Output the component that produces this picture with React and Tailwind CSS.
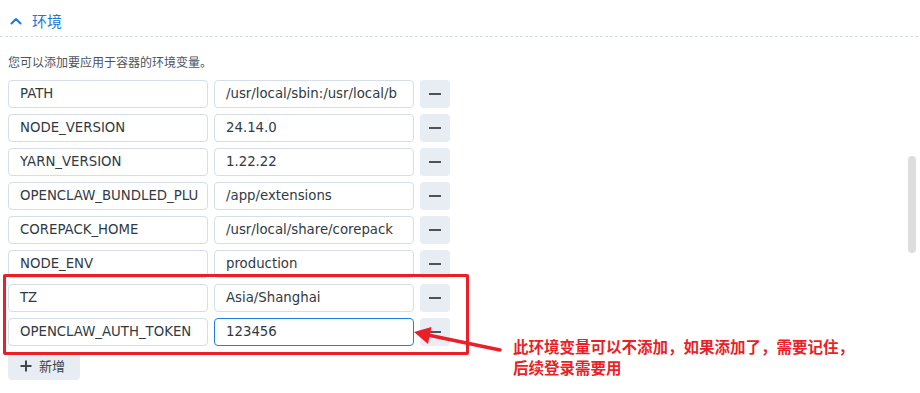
import React from "react";

const rows = [
  { k: "PATH", v: "/usr/local/sbin:/usr/local/b" },
  { k: "NODE_VERSION", v: "24.14.0" },
  { k: "YARN_VERSION", v: "1.22.22" },
  { k: "OPENCLAW_BUNDLED_PLU", v: "/app/extensions" },
  { k: "COREPACK_HOME", v: "/usr/local/share/corepack" },
  { k: "NODE_ENV", v: "production" },
  { k: "TZ", v: "Asia/Shanghai" },
  { k: "OPENCLAW_AUTH_TOKEN", v: "123456", focus: true },
];

function EnvRow({ k, v, focus }) {
  return (
    <div className="flex gap-[6px] h-[28px]">
      <div className="w-[200px] h-full border border-[#d5dde7] rounded-[4px] pl-[11px] pr-[8px] flex items-center overflow-hidden whitespace-nowrap text-[13.3px] text-[#313a44]">
        {k}
      </div>
      <div
        className={
          focus
            ? "w-[200px] h-full border border-[#1f7fe0] rounded-[4px] pl-[11px] pr-[8px] flex items-center overflow-hidden whitespace-nowrap text-[13.3px] text-[#313a44]"
            : "w-[200px] h-full border border-[#d5dde7] rounded-[4px] pl-[11px] pr-[8px] flex items-center overflow-hidden whitespace-nowrap text-[13.3px] text-[#313a44]"
        }
      >
        {v}
      </div>
      <button className="w-[30px] h-full rounded-[4px] bg-[#e8ecf3] flex items-center justify-center">
        <span className="block w-[12px] h-[2px] bg-[#4a535e]" />
      </button>
    </div>
  );
}

export default function App() {
  return (
    <div className="relative w-[920px] h-[393px] bg-white overflow-hidden font-['DejaVu_Sans','Noto_Sans_CJK_SC',sans-serif]">
      {/* section header */}
      <div className="h-[36px] pt-[6px] pl-[10px] flex items-center gap-[10px] text-[#1a7ad8]">
        <svg width="12" height="8" viewBox="0 0 12 8" fill="none">
          <path d="M1.5 6.5 L6 2 L10.5 6.5" stroke="#1a7ad8" strokeWidth="2" strokeLinecap="round" strokeLinejoin="round" />
        </svg>
        <span className="text-[15px] font-['Noto_Sans_CJK_SC',sans-serif]">环境</span>
      </div>
      <div className="h-px bg-[linear-gradient(to_right,#d3deeb_3px,transparent_3px)] bg-[length:5px_1px]" />

      <div className="flex">
        <div className="flex-1 pl-[8px]">
          <p className="mt-[15px] leading-[20px] text-[12px] text-[#4d545c] font-['Noto_Sans_CJK_SC',sans-serif]">
            您可以添加要应用于容器的环境变量。
          </p>
          <div className="mt-[8px] flex flex-col gap-[6px]">
            {rows.map((r) => (
              <EnvRow key={r.k} {...r} />
            ))}
            <button className="w-[72px] h-[28px] rounded-[4px] bg-[#e8ecf3] flex items-center pl-[12px] gap-[7px] text-[13px] text-[#39424c] font-['Noto_Sans_CJK_SC',sans-serif]">
              <svg width="12" height="12" viewBox="0 0 12 12">
                <path d="M6 0.5 V11.5 M0.5 6 H11.5" stroke="#3f4852" strokeWidth="2" />
              </svg>
              新增
            </button>
          </div>
        </div>
        <div className="w-[12px] pt-[119px]">
          <div className="w-[8px] h-[97px] rounded-full bg-[#dddddd]" />
        </div>
      </div>

      {/* annotation overlay */}
      <div className="absolute left-[3px] top-[274px] w-[466px] h-[81px] border-[3px] border-[#ea1f28] rounded-[2px] pointer-events-none" />
      <svg className="absolute left-0 top-0 pointer-events-none" width="920" height="393">
        <line x1="500" y1="350" x2="428" y2="335" stroke="#ea1f28" strokeWidth="3.5" strokeLinecap="round" />
        <polygon points="414,332 431.5,327 428,344" fill="#ea1f28" />
      </svg>
      <div className="absolute left-[513px] top-[336px] text-[15.5px] leading-[21px] font-bold text-[#ea1f28] font-['Noto_Sans_CJK_SC',sans-serif]">
        <div>此环境变量可以不添加，如果添加了，需要记住，</div>
        <div>后续登录需要用</div>
      </div>
    </div>
  );
}
